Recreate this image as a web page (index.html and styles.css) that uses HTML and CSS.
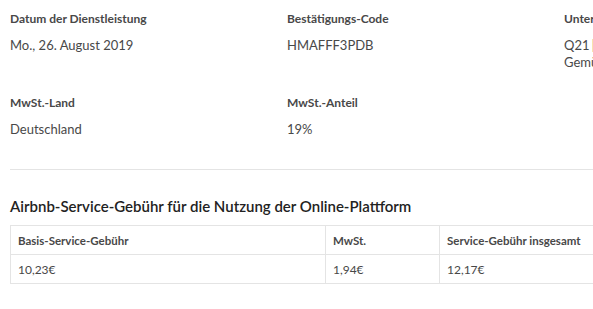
FILE: index.html
```html
<!DOCTYPE html>
<html lang="de">
<head>
  <meta charset="UTF-8">
  <title>Quittung</title>
  <link rel="stylesheet" href="styles.css">
</head>
<body>
<div class="receipt">
  <div class="facts">
    <div class="fact">
      <p class="label">Datum der Dienstleistung</p>
      <p class="value">Mo., 26. August 2019</p>
    </div>
    <div class="fact">
      <p class="label">Bestätigungs-Code</p>
      <p class="value">HMAFFF3PDB</p>
    </div>
    <div class="fact">
      <p class="label">Unterkunft</p>
      <p class="value listing">Q21 | <span class="line">Gemütliche Wohnung im Zentrum</span></p>
    </div>
    <div class="fact">
      <p class="label">MwSt.-Land</p>
      <p class="value">Deutschland</p>
    </div>
    <div class="fact">
      <p class="label">MwSt.-Anteil</p>
      <p class="value">19%</p>
    </div>
  </div>

  <hr class="divider">

  <h3>Airbnb-Service-Gebühr für die Nutzung der Online-Plattform</h3>

  <table class="fees">
    <thead>
      <tr>
        <th class="col-base">Basis-Service-Gebühr</th>
        <th class="col-vat">MwSt.</th>
        <th>Service-Gebühr insgesamt</th>
      </tr>
    </thead>
    <tbody>
      <tr>
        <td>10,23€</td>
        <td>1,94€</td>
        <td>12,17€</td>
      </tr>
    </tbody>
  </table>
</div>
</body>
</html>
```

FILE: styles.css
```css
body {
  margin: 0;
  overflow: hidden;

  font-family: 'Lato', sans-serif;
  color: #484848;

  -webkit-font-smoothing: antialiased;
}

.receipt {
  width: 840px;
  padding: 0 10px;
}

.facts {
  display: grid;
  grid-template-columns: repeat(3, 277px);
  row-gap: 10px;
  padding-top: 11px;
}

.fact {
  min-height: 74px;
}

.label {
  margin: 0;
  font-size: 12px;
  font-weight: bold;
  line-height: 16px;
}

.value {
  margin: 10px 0 0;
  font-size: 13px;
  line-height: 17px;
  padding-right: 16px;
}

.listing {
  word-spacing: -1px;
}

.line {
  display: block;
  word-spacing: normal;
}

.divider {
  margin: 0;
  border: 0;
  border-top: 1px solid #e4e4e4;
}

h3 {
  margin: 26px 0 9px;
  font-size: 15px;
  font-weight: 600;
  line-height: 20px;
  color: #222222;
}

.fees {
  width: 840px;
  table-layout: fixed;
  border-collapse: collapse;
  font-size: 12px;
  text-align: left;
}

.fees th,
.fees td {
  box-sizing: border-box;
  height: 29px;
  padding: 0 7px;
  border: 1px solid #e4e4e4;
}

.fees th {
  font-size: 11.5px;
  font-weight: bold;
}

.col-base {
  width: 315px;
}

.col-vat {
  width: 114px;
}
```
